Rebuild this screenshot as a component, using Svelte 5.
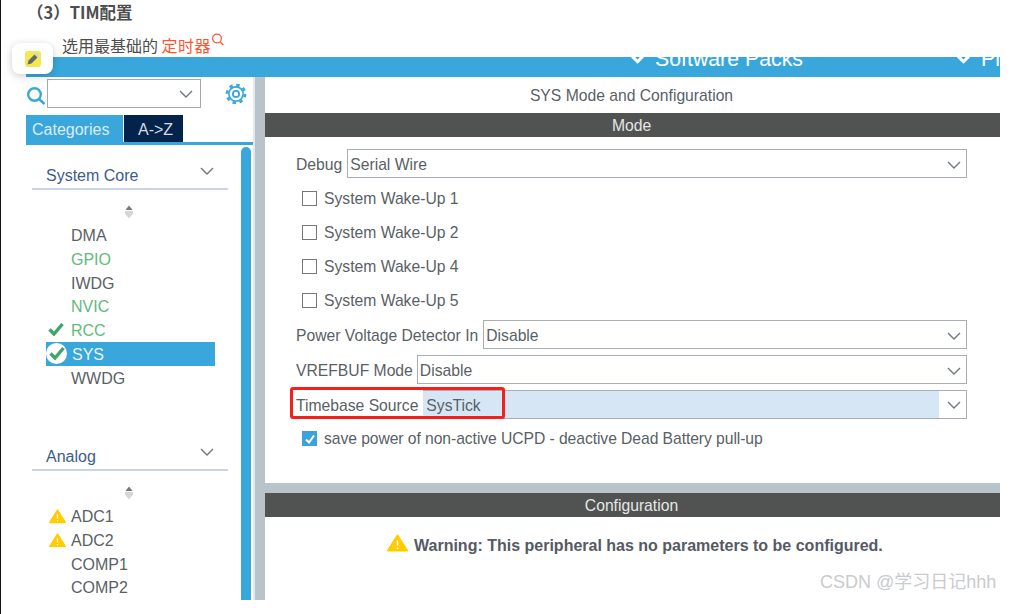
<script lang="ts">
  const coreItems = [
    { name: "DMA", state: "" },
    { name: "GPIO", state: "ok" },
    { name: "IWDG", state: "" },
    { name: "NVIC", state: "ok" },
    { name: "RCC", state: "checked" },
    { name: "SYS", state: "active" },
    { name: "WWDG", state: "" },
  ];
  const analogItems = [
    { name: "ADC1", state: "warn" },
    { name: "ADC2", state: "warn" },
    { name: "COMP1", state: "" },
    { name: "COMP2", state: "" },
  ];
  const sections = [
    { title: "System Core", items: coreItems },
    { title: "Analog", items: analogItems },
  ];
  const wakeups = ["System Wake-Up 1", "System Wake-Up 2", "System Wake-Up 4", "System Wake-Up 5"];
</script>

{#snippet chevron()}
  <svg class="chevron" viewBox="0 0 14 8" width="14" height="8"><path d="M1 1l6 6 6-6" fill="none" stroke="#6e7680" stroke-width="1.4" /></svg>
{/snippet}

{#snippet warning(size)}
  <svg viewBox="0 0 22 19" width={size} height={size * 0.86}>
    <path d="M11 1.5L21 17.5H1z" fill="#ffcc00" stroke="#ffcc00" stroke-width="2" stroke-linejoin="round" />
    <path d="M11 6.5v6M11 14.2v1.6" stroke="#fff" stroke-width="1.6" />
  </svg>
{/snippet}

{#snippet tick()}
  <svg viewBox="0 0 16 14" width="16" height="14"><path d="M1.5 7.5l4.5 4.5 8.5-10" fill="none" stroke="#3ea66b" stroke-width="3.4" /></svg>
{/snippet}

<div class="page">
  <div class="article">
    <h4>（3）TIM配置</h4>
    <p>选用最基础的 <span class="link">定时器</span><svg class="link-search" viewBox="0 0 14 14" width="14" height="14"><circle cx="6" cy="5.5" r="4.4" fill="none" stroke="#fc5531" stroke-width="1.2" /><path d="M9.3 9l3 3" stroke="#fc5531" stroke-width="1.2" /></svg></p>
  </div>

  <div class="shot">
    <div class="topbar">
      <span class="pack"><i></i>Software Packs</span>
      <span class="pack last"><i></i>Pinout</span>
    </div>

    <div class="workspace">
      <aside class="side">
        <div class="search-row">
          <svg viewBox="0 0 20 20" width="20" height="20"><circle cx="8.5" cy="8.5" r="6.3" fill="none" stroke="#39a7db" stroke-width="2.4" /><path d="M13 13l5.5 5" stroke="#39a7db" stroke-width="2.4" /></svg>
          <div class="search-box">{@render chevron()}</div>
          <svg class="gear" viewBox="0 0 24 24" width="22" height="22">
            <circle cx="12" cy="12" r="3.4" fill="none" stroke="#39a7db" stroke-width="2" />
            <circle cx="12" cy="12" r="7.8" fill="none" stroke="#39a7db" stroke-width="1.8" />
            <circle cx="12" cy="12" r="9.8" fill="none" stroke="#39a7db" stroke-width="3" stroke-dasharray="3.7 4" />
          </svg>
        </div>
        <div class="tabs">
          <span class="tab on">Categories</span>
          <span class="tab">A-&gt;Z</span>
        </div>
        <div class="side-body">
          <div class="tree">
            {#each sections as section}
              <section>
                <div class="section-head"><span>{section.title}</span>{@render chevron()}</div>
                <svg class="updown" viewBox="0 0 10 15" width="10" height="15">
                  <path d="M5 0.5L8.5 5H1.5z" fill="#777" />
                  <path d="M1 6h8v2.500l-4 5-4-5z" fill="#d4d6d8" />
                </svg>
                <ul>
                  {#each section.items as item}
                    <li class={item.state}>
                      {#if item.state === "checked"}
                        <span class="mark">{@render tick()}</span>
                      {:else if item.state === "active"}
                        <span class="mark disc">{@render tick()}</span>
                      {:else if item.state === "warn"}
                        <span class="mark warn-mark">{@render warning(17)}</span>
                      {/if}
                      {item.name}
                    </li>
                  {/each}
                </ul>
              </section>
            {/each}
          </div>
          <div class="side-scroll"></div>
        </div>
      </aside>

      <div class="gutter"></div>

      <main class="panel">
        <div class="upper">
          <div class="panel-title">SYS Mode and Configuration</div>
          <div class="bar">Mode</div>
          <div class="field first">
            <span>Debug</span>
            <div class="select">Serial Wire{@render chevron()}</div>
          </div>
          <div class="wakeups">
            {#each wakeups as label}
              <div class="check"><span class="box"></span><span class="check-label">{label}</span></div>
            {/each}
          </div>
          <div class="field power">
            <span>Power Voltage Detector In</span>
            <div class="select">Disable{@render chevron()}</div>
          </div>
          <div class="field vref">
            <span>VREFBUF Mode</span>
            <div class="select">Disable{@render chevron()}</div>
          </div>
          <div class="field timebase">
            <span>Timebase Source</span>
            <div class="select picked"><em>SysTick</em>{@render chevron()}</div>
            <div class="redbox"></div>
          </div>
          <div class="check saved">
            <span class="box on"><svg viewBox="0 0 14 14" width="14" height="14"><path d="M3 7.5l3 3 5-7" fill="none" stroke="#fff" stroke-width="2" /></svg></span>
            <span class="check-label">save power of non-active UCPD - deactive Dead Battery pull-up</span>
          </div>
        </div>
        <div class="hsplit"></div>
        <div class="bar">Configuration</div>
        <div class="notice">{@render warning(21)}<strong>Warning: This peripheral has no parameters to be configured.</strong></div>
      </main>
    </div>
  </div>

  <div class="float-badge">
    <svg viewBox="0 0 16 16" width="16" height="16">
      <rect width="16" height="16" rx="3" fill="#f4e84e" />
      <path d="M2.500 13.500l1-4 6-6 3 3-6 6z" fill="#5f6b70" />
      <path d="M10.500 2.500l3 3" stroke="#b5dcf0" stroke-width="2.400" />
    </svg>
  </div>

  <div class="watermark">CSDN @学习日记hhh</div>
</div>

<style>
  :global(html), :global(body) {
    margin: 0;
    background: #fff;
    overflow: hidden;
  }

  .page {
    position: relative;
    width: 1022px;
    height: 614px;
    overflow: hidden;
    box-sizing: border-box;
    border-left: 1px solid #111;
    font-family: "Liberation Sans", Arial, sans-serif;
    font-size: 16px;
    color: #5a5f66;
  }

  .article {
    height: 57px;
    box-sizing: border-box;
    padding: 2px 0 0 26px;
    font-family: "Noto Sans CJK SC", "Liberation Sans", sans-serif;
    color: #4d4d4d;
  }
  .article h4 {
    margin: 0;
    font-size: 16.5px;
    line-height: 20px;
    font-weight: 700;
  }
  .article p {
    margin: 11px 0 0 35px;
    font-size: 16px;
    line-height: 22px;
    white-space: nowrap;
  }
  .link {
    color: #fc5531;
    letter-spacing: 0.5px;
  }
  .link-search {
    vertical-align: 5px;
  }

  .shot {
    width: 974px;
    height: 543px;
    margin-left: 25px;
    display: flex;
    flex-direction: column;
    overflow: hidden;
  }
  .topbar {
    height: 20px;
    flex: none;
    background: #39a7db;
    overflow: hidden;
    display: flex;
    color: #fff;
    font-size: 21.3px;
    line-height: 24px;
    padding-left: 605px;
  }
  .pack {
    margin-top: -10px;
    white-space: nowrap;
  }
  .pack.last {
    margin-left: 154px;
  }
  .pack i {
    display: inline-block;
    width: 9px;
    height: 9px;
    margin: 0 13px 4px 2px;
    box-sizing: border-box;
    border: 3px solid #fff;
    transform: rotate(45deg);
  }

  .workspace {
    flex: 1;
    min-height: 0;
    display: flex;
  }

  .side {
    width: 227px;
    flex: none;
    display: flex;
    flex-direction: column;
  }
  .search-row {
    height: 38px;
    flex: none;
    display: flex;
    align-items: flex-start;
    box-sizing: border-box;
    padding-top: 2px;
  }
  .search-row > svg:first-child {
    margin-top: 7px;
  }
  .search-box {
    width: 154px;
    height: 29px;
    margin-left: 1px;
    box-sizing: border-box;
    border: 1.5px solid #a5a9b1;
    display: flex;
    align-items: center;
    justify-content: flex-end;
    padding-right: 7px;
  }
  .gear {
    margin: 4px 0 0 24px;
  }
  .tabs {
    flex: none;
    height: 30px;
    box-sizing: border-box;
    display: flex;
    gap: 1px;
    border-bottom: 3px solid #39a7db;
    line-height: 29px;
  }
  .tab {
    width: 59px;
    box-sizing: border-box;
    padding-left: 14px;
    background: #03234b;
    color: #d5dbe3;
  }
  .tab.on {
    width: 97px;
    padding-left: 6px;
    background: #39a7db;
    color: #dcecf6;
  }

  .side-body {
    flex: 1;
    min-height: 0;
    display: flex;
    padding-top: 2px;
  }
  .tree {
    width: 215px;
    flex: none;
    overflow: hidden;
  }
  .side-scroll {
    width: 10px;
    background: #39a7db;
    border-radius: 5px 5px 0 0;
  }

  section {
    height: 281px;
    padding-top: 16px;
    box-sizing: border-box;
  }
  .section-head {
    margin-left: 6px;
    width: 196px;
    height: 27px;
    box-sizing: border-box;
    padding: 0 14px;
    display: flex;
    justify-content: space-between;
    border-bottom: 2px solid #c9d5e6;
    color: #3d5b8c;
    line-height: 26px;
  }
  .section-head .chevron {
    margin-top: 4px;
  }
  .updown {
    display: block;
    margin: 15px 0 0 98px;
  }
  ul {
    list-style: none;
    margin: 3px 0 0 20px;
    padding: 0;
    width: 169px;
  }
  li {
    height: 23.8px;
    line-height: 25.8px;
    padding-left: 25px;
    position: relative;
    box-sizing: border-box;
  }
  li.ok,
  li.checked {
    color: #5fba7d;
  }
  li.active {
    background: #39a7db;
    color: #e8f4fb;
    padding-left: 26px;
  }
  .mark {
    position: absolute;
    left: 2px;
    top: 4px;
    line-height: 0;
  }
  .mark.warn-mark {
    left: 3px;
    top: 5px;
  }
  .mark.disc {
    left: 0;
    top: 1px;
    width: 21px;
    height: 21px;
    border-radius: 50%;
    background: #fff;
    display: flex;
    align-items: center;
    justify-content: center;
  }

  .gutter {
    width: 12px;
    flex: none;
    box-sizing: border-box;
    border-left: 2px solid #e6e9eb;
    background: #b8c4ca;
  }

  .panel {
    flex: 1;
    min-width: 0;
    display: flex;
    flex-direction: column;
    font-size: 15.7px;
  }
  .upper {
    height: 406px;
    flex: none;
  }
  .panel-title {
    height: 36px;
    line-height: 38px;
    text-align: center;
    padding-right: 2px;
  }
  .bar {
    height: 24px;
    line-height: 26px;
    flex: none;
    text-align: center;
    background: #515352;
    color: #e6e6e6;
    padding-right: 2px;
  }
  .hsplit {
    height: 10px;
    flex: none;
    background: #b8c4ca;
  }

  .field {
    position: relative;
    display: flex;
    align-items: center;
    gap: 5px;
    height: 29px;
    margin: 6px 33px 0 31px;
    white-space: nowrap;
  }
  .field.first {
    margin-top: 12px;
  }
  .field.power {
    margin-top: 3px;
  }
  .field.vref {
    gap: 4px;
  }
  .field > span {
    padding-top: 2px;
  }
  .select {
    flex: 1;
    height: 29px;
    box-sizing: border-box;
    border: 1.5px solid #a9aeb6;
    display: flex;
    align-items: center;
    justify-content: space-between;
    padding: 2px 5px 0 2px;
  }
  .select.picked {
    padding: 0 5px 0 0;
    border-left: none;
  }
  .select.picked em {
    font-style: normal;
    flex: none;
    width: 516px;
    height: 100%;
    line-height: 29px;
    padding-left: 3px;
    box-sizing: border-box;
    background: #d6e6f5;
  }
  .redbox {
    position: absolute;
    left: -6px;
    top: -3px;
    width: 215px;
    height: 32px;
    box-sizing: border-box;
    border: 3px solid #f5201c;
    border-radius: 3px;
  }

  .wakeups {
    margin: 3px 0 0 37px;
  }
  .check {
    display: flex;
    align-items: center;
    gap: 7px;
    height: 34px;
  }
  .check-label {
    padding-top: 1px;
  }
  .box {
    width: 15px;
    height: 15px;
    box-sizing: border-box;
    border: 1.5px solid #777;
    flex: none;
    display: flex;
    align-items: center;
    justify-content: center;
  }
  .box.on {
    border: none;
    background: #3ea2da;
  }
  .check.saved {
    height: 15px;
    margin: 12px 0 0 37px;
    white-space: nowrap;
    letter-spacing: -0.07px;
  }

  .notice {
    display: flex;
    align-items: center;
    gap: 6px;
    margin-top: 17px;
    padding-left: 122px;
    height: 22px;
    white-space: nowrap;
    font-size: 16px;
  }
  .notice svg {
    margin-bottom: 3px;
  }
  .notice strong {
    padding-top: 2px;
    color: #555a64;
  }

  .float-badge {
    position: absolute;
    left: 11px;
    top: 43px;
    width: 41px;
    height: 31px;
    border-radius: 8px;
    background: #fff;
    box-shadow: 0 2px 8px rgba(0, 0, 0, 0.2);
    display: flex;
    align-items: center;
    justify-content: center;
  }

  .watermark {
    position: absolute;
    left: 819px;
    top: 571px;
    font-family: "Liberation Sans", "Noto Sans CJK SC", sans-serif;
    font-size: 18px;
    color: #c9cbcd;
    line-height: 22px;
    white-space: nowrap;
  }
</style>
